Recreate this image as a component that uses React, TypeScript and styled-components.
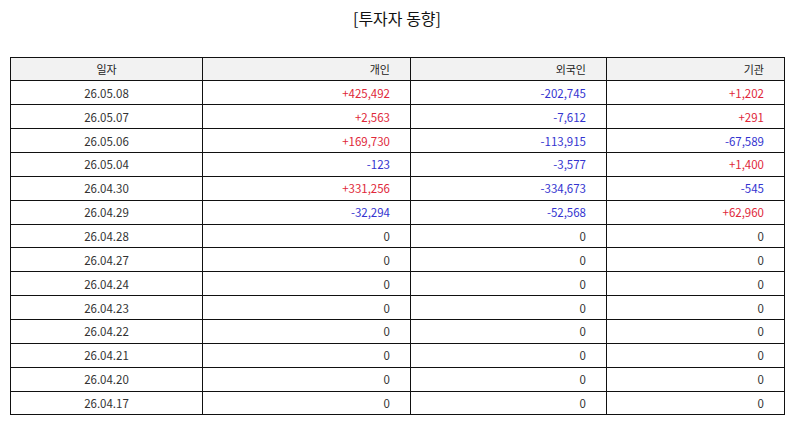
import * as React from "react";
import styled, { createGlobalStyle } from "styled-components";

const GlobalStyle = createGlobalStyle`
  body {
    margin: 0;
    background: #ffffff;
    font-family: "Noto Sans CJK KR", "Noto Sans", sans-serif;
    color: #333333;
  }
`;

const Page = styled.div`
  padding: 0 10px;
`;

const Title = styled.h3`
  margin: 0;
  padding-top: 7px;
  height: 56.5px;
  box-sizing: border-box;
  text-align: center;
  font-size: 16px;
  line-height: 22px;
  font-weight: 400;
  color: #111111;
`;

const Table = styled.table`
  width: 774px;
  border-collapse: collapse;
  table-layout: fixed;
  font-size: 11.5px;
`;

const HeadCell = styled.th<{ $align: "center" | "right" }>`
  height: 22.87px;
  padding: ${(p) => (p.$align === "center" ? "0" : "0 20px 0 0")};
  border: 1px solid #111111;
  background: #f2f2f2;
  font-weight: 400;
  font-size: 11px;
  color: #222222;
  text-align: ${(p) => p.$align};
`;

const Cell = styled.td<{ $tone?: "up" | "down" | "flat" }>`
  height: 22.87px;
  padding: 0 20px 0 0;
  border: 1px solid #111111;
  text-align: right;
  color: ${(p) =>
    p.$tone === "up" ? "#e0283a" : p.$tone === "down" ? "#3434d0" : "#333333"};
`;

const DateCell = styled(Cell)`
  padding: 0;
  text-align: center;
`;

type Row = { date: string; indiv: string; foreign: string; inst: string };

const rows: Row[] = [
  { date: "26.05.08", indiv: "+425,492", foreign: "-202,745", inst: "+1,202" },
  { date: "26.05.07", indiv: "+2,563", foreign: "-7,612", inst: "+291" },
  { date: "26.05.06", indiv: "+169,730", foreign: "-113,915", inst: "-67,589" },
  { date: "26.05.04", indiv: "-123", foreign: "-3,577", inst: "+1,400" },
  { date: "26.04.30", indiv: "+331,256", foreign: "-334,673", inst: "-545" },
  { date: "26.04.29", indiv: "-32,294", foreign: "-52,568", inst: "+62,960" },
  { date: "26.04.28", indiv: "0", foreign: "0", inst: "0" },
  { date: "26.04.27", indiv: "0", foreign: "0", inst: "0" },
  { date: "26.04.24", indiv: "0", foreign: "0", inst: "0" },
  { date: "26.04.23", indiv: "0", foreign: "0", inst: "0" },
  { date: "26.04.22", indiv: "0", foreign: "0", inst: "0" },
  { date: "26.04.21", indiv: "0", foreign: "0", inst: "0" },
  { date: "26.04.20", indiv: "0", foreign: "0", inst: "0" },
  { date: "26.04.17", indiv: "0", foreign: "0", inst: "0" },
];

const toneOf = (v: string) =>
  v.startsWith("+") ? "up" : v.startsWith("-") ? "down" : "flat";

const App = () => {
  return (
    <Page>
      <GlobalStyle />
      <Title>[투자자 동향]</Title>
      <Table>
        <colgroup>
          <col style={{ width: 192 }} />
          <col style={{ width: 208 }} />
          <col style={{ width: 196 }} />
          <col style={{ width: 178 }} />
        </colgroup>
        <thead>
          <tr>
            <HeadCell $align="center">일자</HeadCell>
            <HeadCell $align="right">개인</HeadCell>
            <HeadCell $align="right">외국인</HeadCell>
            <HeadCell $align="right">기관</HeadCell>
          </tr>
        </thead>
        <tbody>
          {rows.map((r) => (
            <tr key={r.date}>
              <DateCell>{r.date}</DateCell>
              <Cell $tone={toneOf(r.indiv)}>{r.indiv}</Cell>
              <Cell $tone={toneOf(r.foreign)}>{r.foreign}</Cell>
              <Cell $tone={toneOf(r.inst)}>{r.inst}</Cell>
            </tr>
          ))}
        </tbody>
      </Table>
    </Page>
  );
};

export default App;
